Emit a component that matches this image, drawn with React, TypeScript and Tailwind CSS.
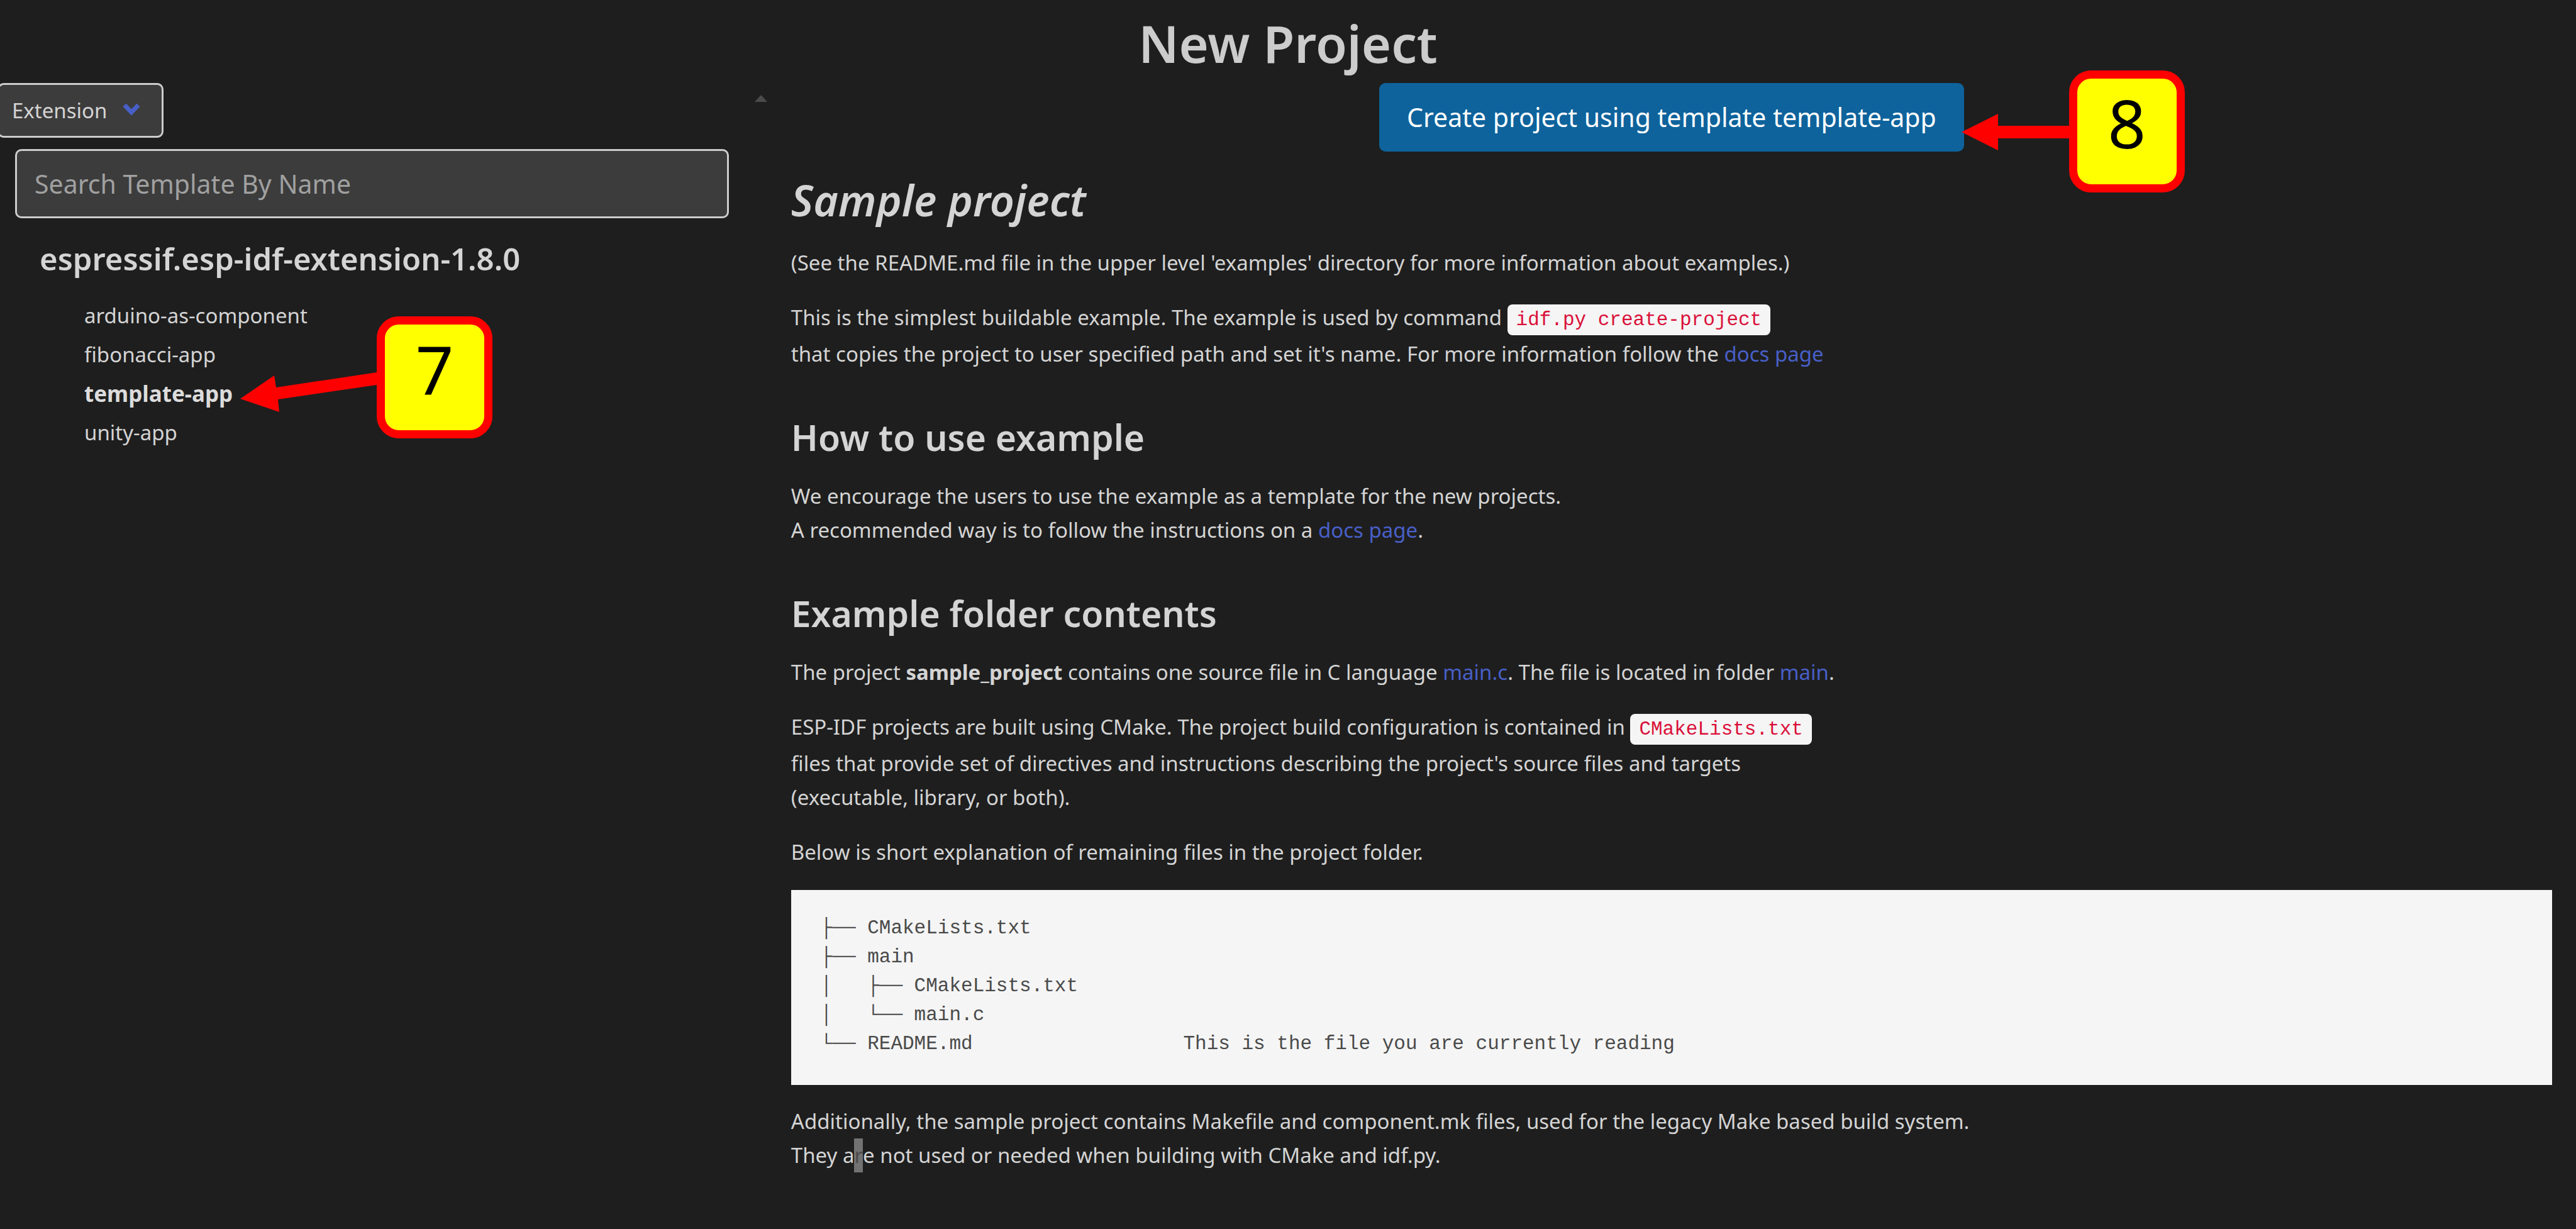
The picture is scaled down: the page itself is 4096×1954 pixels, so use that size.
import type { ReactNode } from "react";

const templates = ["arduino-as-component", "fibonacci-app", "template-app", "unity-app"];

const tree = `├── CMakeLists.txt
├── main
│   ├── CMakeLists.txt
│   └── main.c
└── README.md                  This is the file you are currently reading`;

function Paragraph({ children }: { children: ReactNode }) {
  return <p className="mb-[33px] text-[33px] leading-[54px]">{children}</p>;
}

function Heading({ children }: { children: ReactNode }) {
  return <h3 className="mt-[69px] mb-[31px] text-[57px] leading-[72px] font-semibold">{children}</h3>;
}

function Code({ children }: { children: ReactNode }) {
  return (
    <code className="mb-[3px] inline-block rounded-lg bg-[#f5f5f5] px-3.5 font-['Liberation_Mono',monospace] text-[31px] leading-[49px] text-[#da1039]">
      {children}
    </code>
  );
}

function Link({ children }: { children: ReactNode }) {
  return (
    <a href="#" className="text-[#485fc7]">
      {children}
    </a>
  );
}

function Badge({ children }: { children: ReactNode }) {
  return (
    <span className="block h-[194px] w-[184px] shrink-0 rounded-[35px] border-[13px] border-[#ff0000] bg-[#ffff00] text-center text-[106px] leading-[140px] font-normal text-black">
      {children}
    </span>
  );
}

function Sidebar() {
  return (
    <aside className="flex w-[30%]">
      <div className="min-w-0 flex-1">
        <div className="relative -ml-1 w-[264px]">
          <select
            aria-label="Template source"
            className="block h-[87px] w-full appearance-none rounded-[10px] border-[3px] border-[#cccccc] bg-[#3c3c3c] pl-5 text-[33px] text-[#d4d4d4]"
          >
            <option>Extension</option>
          </select>
          <svg
            className="pointer-events-none absolute top-8 right-[37px] h-5 w-7"
            viewBox="0 0 28 20"
            fill="none"
            stroke="#485fc7"
            strokeWidth="7"
            strokeLinejoin="miter"
            aria-hidden="true"
          >
            <path d="M3 3 L14 14.5 L25 3" />
          </svg>
        </div>
        <div className="mt-[18px] mr-8 ml-6">
          <input
            type="text"
            aria-label="Search template by name"
            placeholder="Search Template By Name"
            className="block h-[110px] w-full rounded-[10px] border-[3px] border-[#cccccc] bg-[#3c3c3c] px-7 text-[41px] text-[#cccccc] placeholder:text-[#a0a0a0]"
          />
        </div>
        <h2 className="mt-8 ml-[63px] text-[49px] leading-[64px] font-semibold">espressif.esp-idf-extension-1.8.0</h2>
        <ul className="mt-7 ml-[134px] text-[33px] leading-[62px]">
          {templates.map((name) =>
            name === "template-app" ? (
              <li key={name} className="relative text-[35px] font-bold text-[#dcdcdc]">
                {name}
                <div className="absolute -top-[92px] left-[248px] flex">
                  <svg className="mt-[89px] h-[63px] w-[217px]" viewBox="0 0 217 63" fill="#ff0000" aria-hidden="true">
                    <path d="M0 42 L54 5 L57 24 L217 0 V20 L60 43 L62 63 Z" />
                  </svg>
                  <Badge>7</Badge>
                </div>
              </li>
            ) : (
              <li key={name}>{name}</li>
            ),
          )}
        </ul>
      </div>
      <div className="flex w-[38px] items-start justify-center pt-[19px]">
        <svg className="h-[11px] w-5" viewBox="0 0 20 11" fill="#4b4b4b" aria-hidden="true">
          <path d="M10 0 L20 11 H0 Z" />
        </svg>
      </div>
    </aside>
  );
}

export default function App() {
  return (
    <div className="min-h-screen overflow-hidden bg-[#1e1e1e] font-['Noto_Sans',sans-serif] text-[#d4d4d4]">
      <h1 className="pt-[19px] pb-[13px] text-center text-[81px] leading-[100px] font-semibold text-[#cccccc]">
        New Project
      </h1>
      <div className="flex">
        <Sidebar />
        <main className="min-w-0 flex-1 pr-[38px] pl-[29px]">
          <div className="flex justify-center">
            <div className="relative">
              <button type="button" className="block h-[109px] rounded-[10px] bg-[#0e639c] px-11 text-[41px] text-white">
                Create project using template template-app
              </button>
              <div className="absolute -top-5 left-full -ml-1 flex">
                <svg className="mt-[69px] h-[58px] w-[171px]" viewBox="0 0 171 58" fill="#ff0000" aria-hidden="true">
                  <path d="M0 29 L58 0 V19 H171 V39 H58 V58 Z" />
                </svg>
                <Badge>8</Badge>
              </div>
            </div>
          </div>
          <h2 className="mt-[35px] mb-[31px] text-[68px] leading-[84px] font-semibold italic">Sample project</h2>
          <Paragraph>
            (See the README.md file in the upper level 'examples' directory for more information about examples.)
          </Paragraph>
          <Paragraph>
            This is the simplest buildable example. The example is used by command <Code>idf.py create-project</Code>
            <br />
            that copies the project to user specified path and set it's name. For more information follow the{" "}
            <Link>docs page</Link>
          </Paragraph>
          <Heading>How to use example</Heading>
          <Paragraph>
            We encourage the users to use the example as a template for the new projects.
            <br />A recommended way is to follow the instructions on a <Link>docs page</Link>.
          </Paragraph>
          <Heading>Example folder contents</Heading>
          <Paragraph>
            The project <strong className="font-bold">sample_project</strong> contains one source file in C language{" "}
            <Link>main.c</Link>. The file is located in folder <Link>main</Link>.
          </Paragraph>
          <Paragraph>
            ESP-IDF projects are built using CMake. The project build configuration is contained in{" "}
            <Code>CMakeLists.txt</Code>
            <br />
            files that provide set of directives and instructions describing the project's source files and targets
            <br />
            (executable, library, or both).
          </Paragraph>
          <Paragraph>Below is short explanation of remaining files in the project folder.</Paragraph>
          <pre className="mb-[31px] bg-[#f5f5f5] px-[47px] pt-[38px] pb-[42px] font-['Liberation_Mono',monospace] text-[31px] leading-[46px] text-[#4a4a4a]">
            {tree}
          </pre>
          <Paragraph>
            Additionally, the sample project contains Makefile and component.mk files, used for the legacy Make based
            build system.
            <br />
            They a<span className="inline-block bg-[#727272] text-[#4a4a4a]">r</span>e not used or needed when building
            with CMake and idf.py.
          </Paragraph>
        </main>
      </div>
    </div>
  );
}
